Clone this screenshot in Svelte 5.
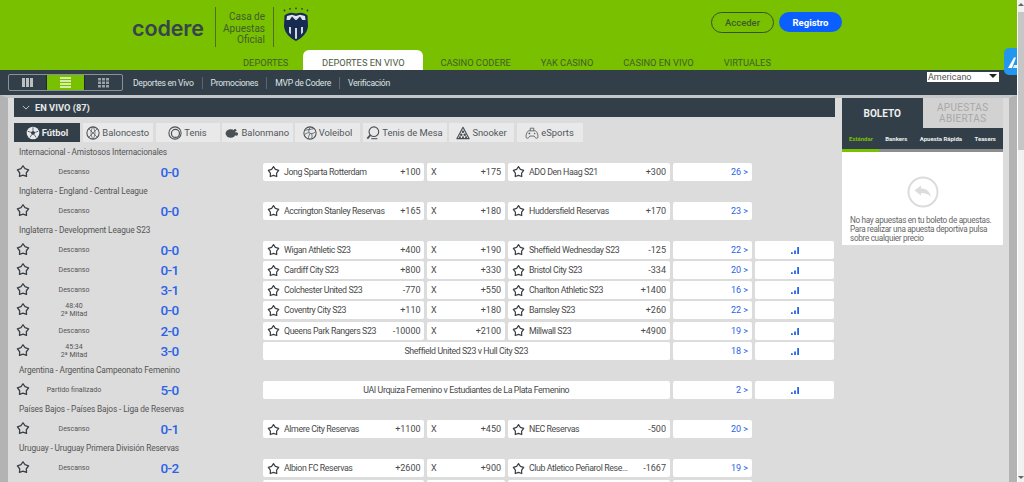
<script>
  const navItems = [
    { label: 'Deportes' },
    { label: 'Deportes en vivo', active: true },
    { label: 'Casino Codere' },
    { label: 'Yak Casino' },
    { label: 'Casino en vivo' },
    { label: 'Virtuales' }
  ];
  const subLinks = ['Deportes en Vivo', 'Promociones', 'MVP de Codere', 'Verificación'];
  const sports = [
    { key: 'ball', label: 'Fútbol', w: 66, active: true },
    { key: 'basket', label: 'Baloncesto', w: 70.5 },
    { key: 'tennis', label: 'Tenis', w: 64 },
    { key: 'hand', label: 'Balonmano', w: 70.5 },
    { key: 'volley', label: 'Voleibol', w: 65 },
    { key: 'paddle', label: 'Tenis de Mesa', w: 84 },
    { key: 'snooker', label: 'Snooker', w: 65 },
    { key: 'pad', label: 'eSports', w: 66 }
  ];
  const m = (status, score, a, oa, ox, b, ob, n, chart = true) => ({ status, score, a, oa, ox, b, ob, n, chart });
  const groups = [
    { title: 'Internacional - Amistosos Internacionales', rows: [
      m(['Descanso'], '0-0', 'Jong Sparta Rotterdam', '+100', '+175', 'ADO Den Haag S21', '+300', 26, false) ] },
    { title: 'Inglaterra - England - Central League', rows: [
      m(['Descanso'], '0-0', 'Accrington Stanley Reservas', '+165', '+180', 'Huddersfield Reservas', '+170', 23, false) ] },
    { title: 'Inglaterra - Development League S23', rows: [
      m(['Descanso'], '0-0', 'Wigan Athletic S23', '+400', '+190', 'Sheffield Wednesday S23', '-125', 22),
      m(['Descanso'], '0-1', 'Cardiff City S23', '+800', '+330', 'Bristol City S23', '-334', 20),
      m(['Descanso'], '3-1', 'Colchester United S23', '-770', '+550', 'Charlton Athletic S23', '+1400', 16),
      m(['48:40', '2ª Mitad'], '0-0', 'Coventry City S23', '+110', '+180', 'Barnsley S23', '+260', 22),
      m(['Descanso'], '2-0', 'Queens Park Rangers S23', '-10000', '+2100', 'Millwall S23', '+4900', 19),
      { status: ['45:34', '2ª Mitad'], score: '3-0', merged: 'Sheffield United S23 v Hull City S23', n: 18, chart: true } ] },
    { title: 'Argentina - Argentina Campeonato Femenino', rows: [
      { status: ['Partido finalizado'], score: '5-0', merged: 'UAI Urquiza Femenino v Estudiantes de La Plata Femenino', n: 2, chart: true } ] },
    { title: 'Países Bajos - Países Bajos - Liga de Reservas', rows: [
      m(['Descanso'], '0-1', 'Almere City Reservas', '+1100', '+450', 'NEC Reservas', '-500', 20, false) ] },
    { title: 'Uruguay - Uruguay Primera División Reservas', rows: [
      m(['Descanso'], '0-2', 'Albion FC Reservas', '+2600', '+900', 'Club Atletico Peñarol Reservas', '-1667', 19, false),
      { blank: true } ] }
  ];
</script>

{#snippet star(cls)}
  <svg class={cls} viewBox="0 0 16 16" aria-hidden="true">
    <path d="M8 2 10.300 5.400 14.400 6.600 11.800 10 12 14.200 8 12.800 4 14.200 4.200 10 1.600 6.600 5.700 5.400Z" fill="none" stroke="#3b4045" stroke-width="1.500" stroke-linejoin="round" />
  </svg>
{/snippet}

{#snippet sportIcon(key, active)}
  {@const c = active ? '#e8eaeb' : '#4a5055'}
  <svg class="sicon" viewBox="0 0 16 16" aria-hidden="true" fill="none" stroke={c} stroke-width="1.200">
    {#if key === 'ball'}
      <circle cx="8" cy="8" r="7.200" fill={c} stroke="none" />
      <path d="M8 5.400 10.500 7.200 9.500 10H6.500L5.500 7.200Z" fill="#34424c" stroke="none" />
      <path d="M8 1.500V5.400M10.500 7.200 14 6M9.500 10l2 3M6.500 10l-2 3M5.500 7.200 2 6" stroke="#34424c" stroke-width=".9" />
    {:else if key === 'basket'}
      <circle cx="8" cy="8" r="7" />
      <path d="M3.200 3.200 12.800 12.800M12.800 3.200 3.200 12.800M8 1.200C5 5 5 11 8 14.800M8 1.200C11 5 11 11 8 14.800" stroke-width=".8" />
    {:else if key === 'tennis'}
      <circle cx="8" cy="8" r="7" />
      <circle cx="8.500" cy="8.500" r="4.600" stroke-width="1.400" />
    {:else if key === 'hand'}
      <ellipse cx="6.500" cy="8.500" rx="5.800" ry="4.800" fill={c} stroke="none" />
      <circle cx="13" cy="9" r="2" fill={c} stroke="none" />
      <circle cx="11.500" cy="4.800" r="1.500" fill={c} stroke="none" />
    {:else if key === 'volley'}
      <circle cx="8" cy="8" r="7" />
      <path d="M8 1.500C6 5 6.500 8 8 8.500M8 8.500C11 9 13.500 8 14.500 6M8 8.500C6.500 11 6 13 6.500 14.500M2.500 5C5 4 9 4 12.500 3M2 9.500C4.500 8 6 7.500 7 7.500M10 9C10.500 11 10.500 12.500 10 14" stroke-width=".9" />
    {:else if key === 'paddle'}
      <circle cx="9" cy="6.500" r="5.500" stroke-width="1.300" />
      <path d="M5 10.500 1.500 14.500" stroke-width="2" />
      <path d="M6 14.500H13" stroke-width="1.200" />
    {:else if key === 'snooker'}
      <path d="M8 1.500 15 14.500H1Z" stroke-width="1.300" stroke-linejoin="round" />
      <circle cx="8" cy="6.500" r="1.400" fill={c} stroke="none" />
      <circle cx="6" cy="10" r="1.400" fill={c} stroke="none" />
      <circle cx="10" cy="10" r="1.400" fill={c} stroke="none" />
      <circle cx="4.500" cy="12.800" r="1.200" fill={c} stroke="none" />
      <circle cx="8" cy="12.800" r="1.200" fill={c} stroke="none" />
      <circle cx="11.500" cy="12.800" r="1.200" fill={c} stroke="none" />
    {:else}
      <path d="M4.500 5.500H11.500C13.500 5.500 15 10 14.800 12.500 14.600 14.500 12.500 14.500 11.500 13L10.500 11.500H5.500L4.500 13C3.500 14.500 1.400 14.500 1.200 12.500 1 10 2.500 5.500 4.500 5.500Z" stroke-width=".9" />
      <path d="M6 5.500V2.500H10V5.500M4 8.500H6M5 7.500V9.500" stroke-width=".9" />
      <circle cx="11" cy="8.500" r=".8" fill={c} stroke="none" />
    {/if}
  </svg>
{/snippet}

<div class="screen">
  <div class="page">
    <header class="top">
      <div class="brand-row">
        <div class="brand">
          <span class="logo">codere</span>
          <span class="vline first"></span>
          <span class="tagline">Casa de<br />Apuestas<br />Oficial</span>
          <span class="vline"></span>
          <svg class="crest" viewBox="0 0 26 35" aria-hidden="true">
            <g fill="#2a3a5a">
              <circle cx="1.500" cy="3.500" r=".9" /><circle cx="7" cy="1.800" r=".9" /><circle cx="13" cy="1.300" r=".9" /><circle cx="19" cy="1.800" r=".9" /><circle cx="24.500" cy="3.500" r=".9" />
            </g>
            <path d="M1.500 8.500C5 5.500 8 5 13 6.500 18 5 21 5.500 24.500 8.500L25 19C24.500 26 19 31 13 34 7 31 1.500 26 1 19Z" fill="#172b52" />
            <path d="M4 9 9 7.800 13 9 17 7.800 22 9 22.500 13H3.500Z" fill="#dfe5ea" />
            <path d="M6 14 9 9.500 13 13.500 17 9.500 20 14 20.500 19 17.500 16 13 19 8.500 16 5.500 19Z" fill="#172b52" />
            <path d="M6 20H8V27.500L6 25.500ZM12 21H14V31.500L13 32 12 31.500ZM18 20H20V25.500L18 27.500Z" fill="#cfd7de" />
          </svg>
        </div>
        <div class="auth">
          <button class="btn ghost">Acceder</button>
          <button class="btn solid">Registro</button>
        </div>
      </div>
      <nav class="tabs">
        {#each navItems as item}
          <span class="tab" class:active={item.active}>{item.label}</span>
        {/each}
      </nav>
    </header>

    <div class="subnav">
      <div class="views">
        <span class="view">
          <svg viewBox="0 0 11 11" aria-hidden="true"><path d="M0 1h3v9H0zM4 1h3v9H4zM8 1h3v9H8z" fill="#b9bfc3" /></svg>
        </span>
        <span class="view on">
          <svg viewBox="0 0 11 11" aria-hidden="true"><path d="M0 0h11v2H0zM0 3h11v2H0zM0 6h11v2H0zM0 9h11v2H0z" fill="#d6eda8" /></svg>
        </span>
        <span class="view">
          <svg viewBox="0 0 11 11" aria-hidden="true"><path d="M0 1h3v2.500H0zM4 1h3v2.500H4zM8 1h3v2.500H8zM0 4.500h3V7H0zM4 4.500h3V7H4zM8 4.500h3V7H8zM0 8h3v2.500H0zM4 8h3v2.500H4zM8 8h3v2.500H8z" fill="#9aa2a7" /></svg>
        </span>
      </div>
      <div class="links">
        {#each subLinks as l}
          <span class="link">{l}</span>
        {/each}
      </div>
      <div class="select">
        <span>Americano</span>
        <span class="caret"></span>
      </div>
      <div class="float-tab">
        <svg viewBox="0 0 14 14" aria-hidden="true"><path d="M1 13 7 2.500 9 2.500 5 13Z" fill="#fff" /><path d="M7 10 13 10 12 13 6 13Z" fill="#fff" opacity=".85" /></svg>
      </div>
    </div>

    <main class="content">
      <section class="live">
        <div class="live-head">
          <svg class="chev" viewBox="0 0 10 6" aria-hidden="true"><path d="M1 1l4 4 4-4" fill="none" stroke="#d5d9dc" stroke-width="1.100" /></svg>
          <span>EN VIVO (87)</span>
        </div>
        <div class="sports">
          {#each sports as s}
            <span class="sport" class:active={s.active} style="width:{s.w}px">
              {@render sportIcon(s.key, s.active)}
              {s.label}
            </span>
          {/each}
        </div>
        {#each groups as g}
          <div class="league">{g.title}</div>
          {#each g.rows as r}
            <div class="row">
              {#if r.blank}
                <span></span>
                <span class="cell"></span><span class="cell"></span><span class="cell"></span><span class="cell"></span>
              {:else}
                <div class="info">
                  {@render star('star big')}
                  <span class="status">
                    {#each r.status as line}<span>{line}</span>{/each}
                  </span>
                  <span class="score">{r.score}</span>
                </div>
                {#if r.merged}
                  <span class="cell merged">{r.merged}</span>
                {:else}
                  <span class="cell team">
                    {@render star('star')}
                    <span class="name">{r.a}</span>
                    <span class="odd">{r.oa}</span>
                  </span>
                  <span class="cell draw">
                    <span>X</span>
                    <span class="odd">{r.ox}</span>
                  </span>
                  <span class="cell team">
                    {@render star('star')}
                    <span class="name">{r.b}</span>
                    <span class="odd">{r.ob}</span>
                  </span>
                {/if}
                <span class="cell more">{r.n} &gt;</span>
                {#if r.chart}
                  <span class="cell bars">
                    <svg viewBox="0 0 9 9" aria-hidden="true"><path d="M0 7h2v2H0zM3.500 5h2v4h-2zM7 1h2v8H7z" fill="#2563e6" /></svg>
                  </span>
                {/if}
              {/if}
            </div>
          {/each}
        {/each}
      </section>

      <aside class="slip">
        <div class="slip-tabs">
          <span class="slip-tab on">BOLETO</span>
          <span class="slip-tab">APUESTAS ABIERTAS</span>
        </div>
        <div class="slip-sub">
          <span class="green">Estándar</span>
          <span>Bankers</span>
          <span>Apuesta Rápida</span>
          <span>Teasers</span>
        </div>
        <div class="slip-line"><span></span></div>
        <div class="slip-body">
          <svg class="back" viewBox="0 0 32 32" aria-hidden="true">
            <circle cx="16" cy="16" r="14.500" fill="none" stroke="#dcdcdc" stroke-width="2" />
            <path d="M7.500 14.500 14 9.500V12.500C19 12.500 23 15 24 21 21.500 18 18.500 17 14 17V19.500Z" fill="#dcdcdc" />
          </svg>
          <p>No hay apuestas en tu boleto de apuestas.<br />Para realizar una apuesta deportiva pulsa<br />sobre cualquier precio</p>
        </div>
      </aside>
    </main>
  </div>

  <div class="scrollbar">
    <span class="arrow up"></span>
    <span class="thumb"></span>
    <span class="arrow down"></span>
  </div>
</div>

<style>
  :global(body) { margin: 0; }
  .screen {
    display: flex;
    width: 1024px;
    height: 482px;
    overflow: hidden;
    font-family: Roboto, "Liberation Sans", sans-serif;
    background: #fff;
  }
  .page { width: 1017px; flex: none; display: flex; flex-direction: column; height: 482px; overflow: hidden; }

  .top { height: 70px; background: #79c000; display: flex; flex-direction: column; flex: none; }
  .brand-row { height: 50px; display: flex; flex: none; }
  .brand { display: flex; align-items: flex-start; padding-left: 132px; width: 711px; box-sizing: border-box; flex: none; }
  .logo {
    font-family: Inter, sans-serif;
    font-weight: 600;
    font-size: 21.500px;
    line-height: 24px;
    letter-spacing: -.1px;
    color: #36444e;
    margin-top: 16px;
    width: 83px;
  }
  .vline { width: 1px; height: 40px; margin-top: 7px; background: #4d7020; flex: none; }
  .tagline {
    width: 49px;
    margin: 11px 8px 0 0;
    text-align: right;
    font-size: 10px;
    line-height: 11.700px;
    color: #3f5e2b;
  }
  .crest { width: 26px; height: 35px; margin: 7px 0 0 9px; }
  .auth { display: flex; gap: 5px; padding-top: 12px; align-items: flex-start; }
  .btn {
    width: 63px;
    height: 21px;
    border-radius: 11px;
    font: 500 9.500px Roboto, sans-serif;
    padding: 0;
    box-sizing: border-box;
  }
  .ghost { background: transparent; border: 1px solid #35512a; color: #3c5c2a; }
  .solid { background: #0b5fff; border: 0; color: #fff; height: 20px; font-weight: 700; }

  .tabs { display: flex; padding-left: 228px; height: 20px; align-items: stretch; }
  .tab {
    padding: 0 15px;
    font-size: 9.300px;
    line-height: 25px;
    text-transform: uppercase;
    color: #3d5f2a;
    white-space: nowrap;
  }
  .tab.active {
    background: #fff;
    color: #4a5a40;
    width: 120px;
    flex: none;
    box-sizing: border-box;
    text-align: center;
    padding: 0;
    border-radius: 6px 6px 0 0;
    margin: 0 2px 0 0;
  }

  .subnav {
    position: relative;
    height: 25px;
    background: #333f48;
    display: flex;
    flex: none;
    align-items: flex-start;
    padding: 4px 0 0 8px;
    box-sizing: border-box;
  }
  .views { display: flex; border: 1px solid #88929a; border-radius: 2px; height: 17px; box-sizing: border-box; width: 115px; }
  .view { flex: 1; display: flex; align-items: center; justify-content: center; }
  .view + .view { border-left: 1px solid #1f2a32; }
  .view.on { background: #79c000; }
  .view svg { width: 11px; height: 11px; }
  .links { display: flex; margin-left: 2px; height: 17px; align-items: center; }
  .link {
    font-size: 8.600px;
    letter-spacing: -.28px;
    color: #dfe3e6;
    padding: 0 8px;
    line-height: 12px;
    white-space: nowrap;
    border-left: 1px solid #5b666e;
  }
  .link:first-child { border-left: 0; }
  .select {
    position: absolute;
    left: 927px;
    top: 2px;
    width: 72px;
    height: 10px;
    background: #fff;
    color: #555;
    font-size: 9px;
    line-height: 10px;
    padding-left: 1px;
    box-sizing: border-box;
  }
  .caret {
    position: absolute;
    right: 2px;
    top: 2px;
    border: 4px solid transparent;
    border-top: 4px solid #222;
    border-bottom: 0;
  }
  .float-tab {
    position: absolute;
    right: 0;
    top: -22px;
    width: 13px;
    height: 27px;
    background: #2396ee;
    border-radius: 5px 0 0 5px;
    overflow: hidden;
  }
  .float-tab svg { width: 14px; height: 14px; position: absolute; left: 3px; top: 7px; }

  .content {
    flex: 1;
    background: #dcdcdc;
    border-left: 8px solid #b3b3b3;
    border-right: 8px solid #b3b3b3;
    border-top: 3px solid #c4c8ca;
    display: flex;
    gap: 7px;
    padding-left: 6px;
    overflow: hidden;
    align-items: flex-start;
  }
  .live { width: 821px; flex: none; }
  .live-head {
    height: 19px;
    background: #333f48;
    color: #e6e9eb;
    font-size: 9.300px;
    font-weight: 700;
    display: flex;
    align-items: center;
    gap: 5px;
    padding-left: 8px;
  }
  .chev { width: 8px; height: 5px; }
  .sports { display: flex; gap: 2.500px; margin-top: 6px; height: 19px; }
  .sport {
    background: #e9e9e9;
    color: #50565a;
    font-size: 9.400px;
    display: flex;
    align-items: center;
    justify-content: center;
    gap: 2px;
    flex: none;
    white-space: nowrap;
  }
  .sport.active { background: #333f48; color: #e8eaeb; font-weight: 700; }
  .sicon { width: 14px; height: 14px; flex: none; }

  .league {
    height: 19px;
    line-height: 17.500px;
    font-size: 8.300px;
    letter-spacing: -.12px;
    color: #555;
    padding-left: 5px;
    box-sizing: border-box;
    white-space: nowrap;
  }
  .sports + .league { margin-top: 1.500px; }
  .row {
    display: grid;
    grid-template-columns: 246px 161px 78px 161.500px 79.500px 79px;
    column-gap: 3px;
    height: 18px;
    margin-bottom: 2.200px;
  }
  .info { display: grid; grid-template-columns: 18px 84px 107px; align-items: center; }
  .status {
    display: flex;
    flex-direction: column;
    align-items: center;
    font-size: 7px;
    line-height: 8px;
    color: #555;
    white-space: nowrap;
  }
  .score { text-align: center; font-size: 13.500px; font-weight: 500; letter-spacing: -.6px; color: #2a63e6; }
  .cell {
    background: #fff;
    border-radius: 2px;
    display: flex;
    align-items: center;
    font-size: 8.800px;
    letter-spacing: -.4px;
    color: #4a4a4a;
    white-space: nowrap;
    min-width: 0;
  }
  .team { padding: 0 3.500px 0 4px; gap: 4px; }
  .name { flex: 1; min-width: 0; overflow: hidden; text-overflow: ellipsis; }
  .odd { margin-left: auto; font-size: 9px; letter-spacing: 0; flex: none; padding-left: 10px; }
  .draw { padding: 0 4px; justify-content: space-between; font-size: 9px; letter-spacing: 0; }
  .merged { grid-column: span 3; justify-content: center; }
  .more { justify-content: flex-end; padding-right: 4px; color: #2a63e6; font-size: 9px; letter-spacing: 0; }
  .bars { justify-content: center; }
  .bars svg { width: 8px; height: 8px; }
  .star { width: 13px; height: 13px; flex: none; }
  .star.big { width: 14px; height: 14px; margin: -2px 0 0 2px; }

  .slip { width: 161px; flex: none; background: #fff; }
  .slip-tabs { display: flex; height: 30px; }
  .slip-tab {
    width: 50%;
    background: #d2d2d2;
    color: #a8a8a8;
    font-size: 10px;
    line-height: 11.500px;
    text-align: center;
    display: flex;
    align-items: center;
    justify-content: center;
    padding: 0 8px;
    box-sizing: border-box;
    letter-spacing: .3px;
  }
  .slip-tab.on { background: #333f48; color: #eef0f1; font-weight: 700; letter-spacing: 0; padding-top: 2px; }
  .slip-sub {
    height: 21px;
    background: #333f48;
    display: flex;
    justify-content: space-between;
    align-items: center;
    padding: 0 7px;
    font-size: 6px;
    font-weight: 700;
    color: #eef0f1;
    white-space: nowrap;
  }
  .green { color: #79c000; }
  .slip-line { height: 3px; background: #8d8d8d; }
  .slip-line span { display: block; width: 37px; height: 3px; background: #79c000; }
  .slip-body { height: 93px; display: flex; flex-direction: column; box-sizing: border-box; padding: 24px 0 0 8px; }
  .back { width: 32px; height: 32px; align-self: center; margin-left: -8px; }
  .slip-body p {
    margin: 8px 0 0;
    font-size: 8.200px;
    letter-spacing: -.32px;
    line-height: 8.800px;
    color: #666;
    white-space: nowrap;
  }

  .scrollbar { flex: 1; background: #f1f1f1; position: relative; border-left: 1px solid #fff; }
  .thumb { position: absolute; left: 0; right: 0; top: 12px; height: 138px; background: #c6c6c6; }
  .arrow { position: absolute; left: 0; border: 3px solid transparent; }
  .up { top: 3px; border-bottom: 3px solid #666; border-top: 0; }
  .down { bottom: 3px; border-top: 3px solid #666; border-bottom: 0; }
</style>
